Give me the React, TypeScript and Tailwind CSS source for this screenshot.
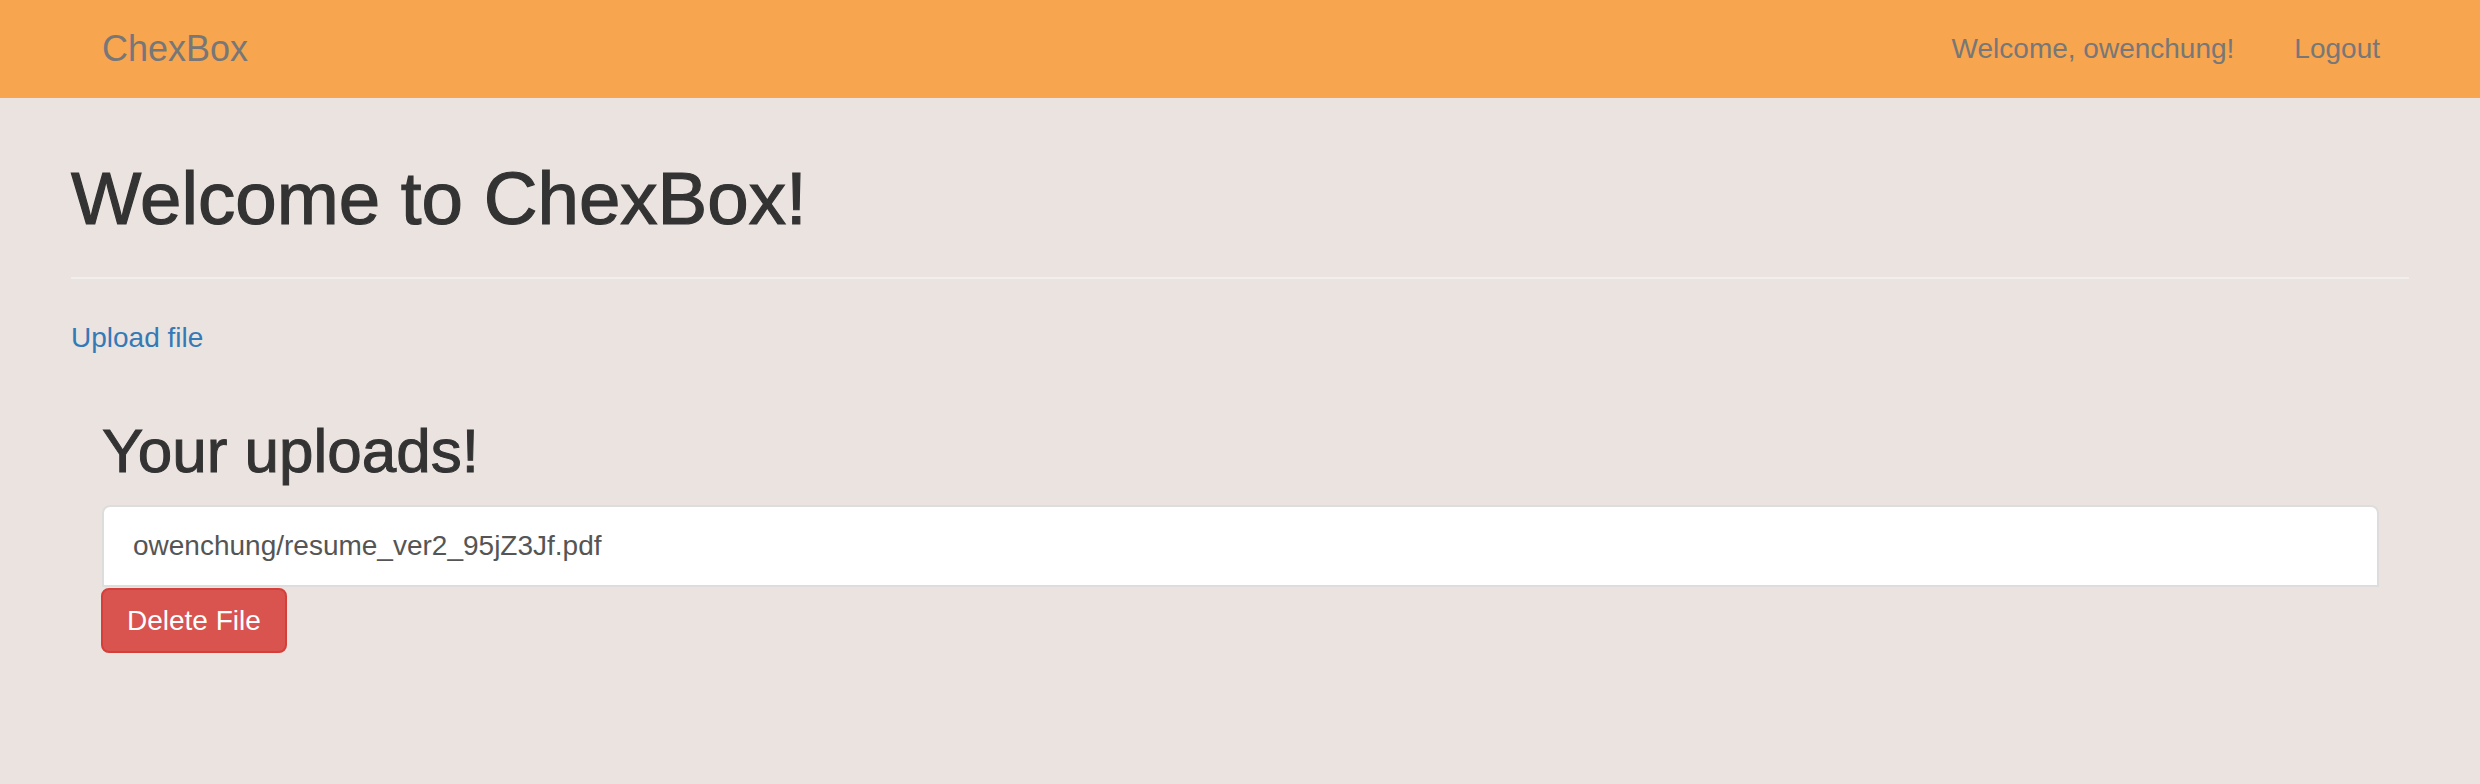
export default function App() {
  return (
    <div className="min-h-screen bg-[#ebe3e0] font-['Liberation_Sans',Arial,sans-serif] text-[#333]">
      {/* Navbar */}
      <nav className="h-[98px] bg-[#f7a54f] flex items-center justify-between pl-[102px] pr-[100px]">
        <a className="text-[36px] leading-[40px] text-[#777]">ChexBox</a>
        <div className="flex items-center gap-[60px] text-[28px] leading-[40px] text-[#777]">
          <span>Welcome, owenchung!</span>
          <a>Logout</a>
        </div>
      </nav>

      <main className="px-[71px] pt-[60px]">
        {/* medium weight, approximated with a thin stroke */}
        <h1 className="text-[74.5px] leading-[82px] font-normal [-webkit-text-stroke:1.2px_#333]">Welcome to ChexBox!</h1>
        <div className="mt-[37px] h-[2px] bg-[#f1eeed]" />

        <a className="mt-[39px] block w-max text-[28px] leading-[40px] text-[#337ab7]">Upload file</a>

        {/* Uploads list */}
        <section className="pl-[31px] pr-[30px] mt-[59px]">
          <h2 className="text-[62px] leading-[68px] font-normal [-webkit-text-stroke:1px_#333]">Your uploads!</h2>
          <div className="mt-[20px]">
            <div className="bg-white border-2 border-[#dddddd] rounded-t-[8px] pl-[29px] pr-[30px] py-[19px] text-[28px] leading-[40px] text-[#555]">
              owenchung/resume_ver2_95jZ3Jf.pdf
            </div>
            <button className="-ml-px mt-px bg-[#d9534f] border-2 border-[#d43f3a] rounded-[8px] px-[24px] py-[10px] text-[28px] leading-[41px] text-white">
              Delete File
            </button>
          </div>
        </section>
      </main>
    </div>
  )
}
